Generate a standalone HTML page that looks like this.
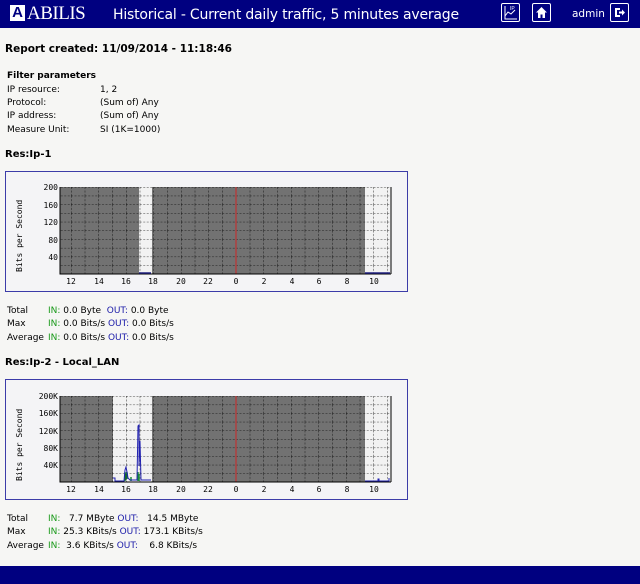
<!DOCTYPE html>
<html><head><meta charset="utf-8"><style>
html,body{margin:0;padding:0;width:640px;height:584px;overflow:hidden;background:#f6f6f4;font-family:"DejaVu Sans","Liberation Sans",sans-serif;color:#000;position:relative}
.hdr{position:absolute;left:0;top:0;width:640px;height:28px;background:#000080;color:#fff}
.ftr{position:absolute;left:0;top:566px;width:640px;height:18px;background:#000080}
.t{position:absolute;white-space:pre;font-size:9px}
.b{font-weight:bold}
.g{color:#1a9a1a}.o{color:#1a1aa8}
.ib{position:absolute;top:3px;width:19px;height:19px;border:1px solid #fff;border-radius:2px;box-sizing:border-box}
svg{position:absolute;left:0;top:0}
</style></head><body>
<div class="hdr">
  <div style="position:absolute;left:10px;top:5px;width:15px;height:16px;background:#fff;color:#000080;font:bold 15px/16px 'Liberation Sans',sans-serif;text-align:center">A</div>
  <div style="position:absolute;left:27px;top:3px;font:19px/22px 'Liberation Serif',serif;letter-spacing:-0.5px">ABILIS</div>
  <div style="position:absolute;left:113px;top:5px;font:14px/20px 'DejaVu Sans',sans-serif;letter-spacing:-0.2px">Historical - Current daily traffic, 5 minutes average</div>
  <div class="ib" style="left:501px"><svg width="17" height="17" viewBox="0 0 17 17" style="position:absolute;left:0;top:0"><text x="8" y="6" font-size="5" fill="#fff" font-family="Liberation Sans">IP</text><path d="M3 2V15H15M3 12L6 8L9 10L13 6" stroke="#fff" fill="none" stroke-width="1"/></svg></div>
  <div class="ib" style="left:532px"><svg width="17" height="17" viewBox="0 0 17 17" style="position:absolute;left:0;top:0"><path d="M8.5 3L3 8.5H5V14H7.5V10.5H9.5V14H12V8.5H14Z" fill="#fff"/></svg></div>
  <div style="position:absolute;left:572px;top:8px;font-size:10.5px">admin</div>
  <div class="ib" style="left:610px"><svg width="17" height="17" viewBox="0 0 17 17" style="position:absolute;left:0;top:0"><path d="M4 4H9V6H6V11H9V13H4Z M8 7.5H11V5.5L14 8.5L11 11.5V9.5H8Z" fill="#fff"/></svg></div>
</div>

<div class="t b" style="left:5px;top:43px;font-size:10.5px">Report created: 11/09/2014 - 11:18:46</div>
<div class="t b" style="left:7px;top:71px">Filter parameters</div>
<div class="t" style="left:7px;top:85px">IP resource:</div><div class="t" style="left:100px;top:85px">1, 2</div>
<div class="t" style="left:7px;top:98px">Protocol:</div><div class="t" style="left:100px;top:98px">(Sum of) Any</div>
<div class="t" style="left:7px;top:111px">IP address:</div><div class="t" style="left:100px;top:111px">(Sum of) Any</div>
<div class="t" style="left:7px;top:125px">Measure Unit:</div><div class="t" style="left:100px;top:125px">SI (1K=1000)</div>

<div class="t b" style="left:5px;top:149px;font-size:10px">Res:Ip-1</div>
<div class="t" style="left:7px;top:306px">Total</div><div class="t" style="left:48px;top:306px"><span class="g">IN:</span> 0.0 Byte  <span class="o">OUT:</span> 0.0 Byte</div>
<div class="t" style="left:7px;top:319px">Max</div><div class="t" style="left:48px;top:319px"><span class="g">IN:</span> 0.0 Bits/s <span class="o">OUT:</span> 0.0 Bits/s</div>
<div class="t" style="left:7px;top:333px">Average</div><div class="t" style="left:48px;top:333px"><span class="g">IN:</span> 0.0 Bits/s <span class="o">OUT:</span> 0.0 Bits/s</div>

<div class="t b" style="left:5px;top:357px;font-size:10px">Res:Ip-2 - Local_LAN</div>
<div class="t" style="left:7px;top:514px">Total</div><div class="t" style="left:48px;top:514px"><span class="g">IN:</span>   7.7 MByte <span class="o">OUT:</span>   14.5 MByte</div>
<div class="t" style="left:7px;top:527px">Max</div><div class="t" style="left:48px;top:527px"><span class="g">IN:</span> 25.3 KBits/s <span class="o">OUT:</span> 173.1 KBits/s</div>
<div class="t" style="left:7px;top:541px">Average</div><div class="t" style="left:48px;top:541px"><span class="g">IN:</span>  3.6 KBits/s <span class="o">OUT:</span>    6.8 KBits/s</div>

<svg width="640" height="584" viewBox="0 0 640 584" font-family="DejaVu Sans Mono,Liberation Mono,monospace" font-size="8">
<defs>
<pattern id="g1" patternUnits="userSpaceOnUse" x="236" y="187" width="13.75" height="8.7"><path d="M0 0V8.7M0 0H13.75" stroke="#000" stroke-width="0.8" stroke-dasharray="2,1.5" fill="none"/></pattern>
<pattern id="g2" patternUnits="userSpaceOnUse" x="236" y="396" width="13.75" height="8.6"><path d="M0 0V8.6M0 0H13.75" stroke="#000" stroke-width="0.8" stroke-dasharray="2,1.5" fill="none"/></pattern>
</defs>
<!-- chart 1 -->
<rect x="5.5" y="171.5" width="402" height="120" fill="#f4f4f6" stroke="#3c3ca8"/>
<rect x="60" y="187" width="330" height="87" fill="#727272"/>
<rect x="139" y="187" width="13" height="87" fill="#f2f2f2"/>
<rect x="365" y="187" width="25" height="87" fill="#f2f2f2"/>
<rect x="60" y="187" width="330" height="87" fill="url(#g1)"/>
<line x1="236" y1="187" x2="236" y2="274" stroke="#b04040" stroke-width="1.5"/>
<path d="M60 187V274H391M391 187V274" stroke="#000" fill="none"/>
<path d="M139 273H151M365 273H390" stroke="#202080" stroke-width="1.5"/>
<g text-anchor="end"><text x="58" y="190">200</text><text x="58" y="208">160</text><text x="58" y="225">120</text><text x="58" y="243">80</text><text x="58" y="260">40</text></g>
<g text-anchor="middle"><text x="71" y="284">12</text><text x="99" y="284">14</text><text x="126" y="284">16</text><text x="153" y="284">18</text><text x="181" y="284">20</text><text x="208" y="284">22</text><text x="236" y="284">0</text><text x="264" y="284">2</text><text x="292" y="284">4</text><text x="319" y="284">6</text><text x="347" y="284">8</text><text x="374" y="284">10</text></g>
<text transform="translate(22,272) rotate(-90)" font-size="8">Bits per Second</text>
<!-- chart 2 -->
<rect x="5.5" y="379.5" width="402" height="120" fill="#f4f4f6" stroke="#3c3ca8"/>
<rect x="60" y="396" width="330" height="86" fill="#727272"/>
<rect x="113" y="396" width="39" height="86" fill="#f2f2f2"/>
<rect x="365" y="396" width="25" height="86" fill="#f2f2f2"/>
<rect x="60" y="396" width="330" height="86" fill="url(#g2)"/>
<line x1="236" y1="396" x2="236" y2="482" stroke="#b04040" stroke-width="1.5"/>
<path d="M60 396V482H391M391 396V482" stroke="#000" fill="none"/>
<path d="M125 481V473H127V479M131 481V477M138 481V472M139 481V474" stroke="#1a8a3a" stroke-width="1.5"/>
<path d="M113 478H115V481H124L125 470L126 467L127 472L128 478L130 480H137L138 426L139 425V466L140 441L141 480H151M365 481H378V479H379V481H389V478" stroke="#2020b0" stroke-width="1" fill="none"/>
<g text-anchor="end"><text x="58" y="399">200K</text><text x="58" y="416">160K</text><text x="58" y="434">120K</text><text x="58" y="451">80K</text><text x="58" y="468">40K</text></g>
<g text-anchor="middle"><text x="71" y="492">12</text><text x="99" y="492">14</text><text x="126" y="492">16</text><text x="153" y="492">18</text><text x="181" y="492">20</text><text x="208" y="492">22</text><text x="236" y="492">0</text><text x="264" y="492">2</text><text x="292" y="492">4</text><text x="319" y="492">6</text><text x="347" y="492">8</text><text x="374" y="492">10</text></g>
<text transform="translate(22,481) rotate(-90)" font-size="8">Bits per Second</text>
</svg>
<div class="ftr"></div>
</body></html>
